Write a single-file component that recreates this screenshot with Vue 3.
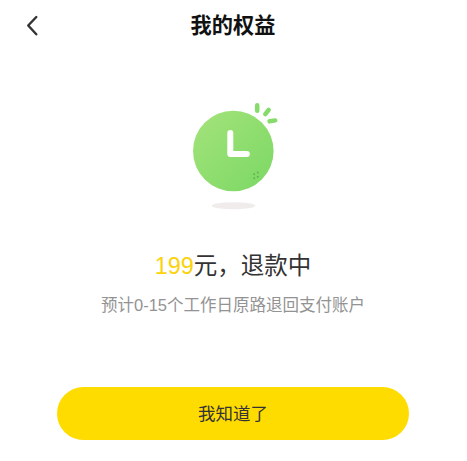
<template>
  <main class="page">
    <header class="bar">
      <svg class="back" width="16" height="24" viewBox="0 0 16 24"><path d="M12.3 4 4.2 12.5l8.1 8.8" /></svg>
      <h1>我的权益</h1>
    </header>
    <svg class="clock" width="110" height="120" viewBox="178 94 110 120">
      <defs>
        <linearGradient id="disc" x1="0" y1="0" x2="1" y2="1">
          <stop offset="0.1" stop-color="#a0e279" /><stop offset="0.9" stop-color="#7fd966" />
        </linearGradient>
      </defs>
      <ellipse cx="233.5" cy="205.8" rx="21.8" ry="3.5" fill="#f0ecec" />
      <circle cx="233.3" cy="151" r="40.3" fill="url(#disc)" />
      <path d="M230.3 133v21.1h16.5" fill="none" stroke="#fff" stroke-width="6" stroke-linecap="round" stroke-linejoin="round" />
      <g fill="none" stroke="#85dc6b" stroke-width="4.5" stroke-linecap="round">
        <path d="M257.2 105.3v5.5M268.7 109.9l-3.4 4.2M275.2 120.4l-5.6.9" />
      </g>
      <g fill="#5fb550">
        <circle cx="254.2" cy="174.2" r="1" /><circle cx="257.8" cy="172.6" r="1" />
        <circle cx="254.2" cy="178.2" r="1" /><circle cx="257.8" cy="176.8" r="1" />
      </g>
    </svg>
    <h2><span>199</span>元，退款中</h2>
    <p>预计0-15个工作日原路退回支付账户</p>
    <button>我知道了</button>
  </main>
</template>

<script setup>
</script>

<style>
body { margin: 0; background: #fff; }
</style>
<style scoped>
.page { box-sizing: border-box; width: 467px; height: 461px; padding-right: 1px; display: flex; flex-direction: column; align-items: center; overflow: hidden; background: #fff; font-family: "Liberation Sans", "Noto Sans CJK SC", sans-serif; }
.bar { width: 100%; height: 50px; display: grid; grid-template-columns: 60px 1fr 60px; align-items: center; }
.back { margin-left: 24px; fill: none; stroke: #333; stroke-width: 2.4; stroke-linecap: round; stroke-linejoin: round; }
h1 { margin: 0; padding-top: 2px; text-align: center; font-size: 21.2px; line-height: 30px; font-weight: 700; color: #111; }
.clock { margin-top: 44px; flex: none; }
h2 { margin: 35px 0 0; font-size: 23.5px; line-height: 34px; font-weight: 400; color: #333; }
h2 span { color: #fbd20b; }
p { margin: 10px 0 0; font-size: 16.5px; line-height: 24px; color: #939393; }
button { margin: 70px 0 0; width: 352px; height: 53px; flex: none; border: 0; border-radius: 27px; background: #ffdc00; color: #333; font-family: inherit; font-size: 17.5px; padding: 0 0 2px; }
</style>
